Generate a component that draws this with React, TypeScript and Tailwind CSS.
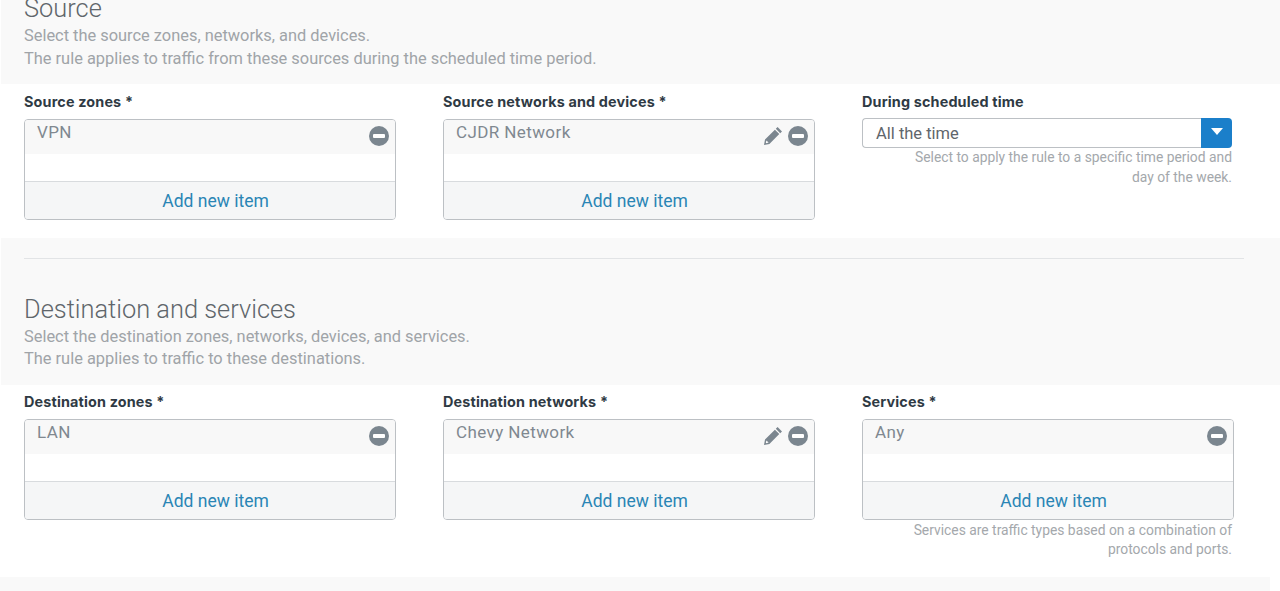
function MinusIcon() {
  return (
    <svg viewBox="0 0 20 20" className="w-5 h-5">
      <circle cx="10" cy="10" r="10" fill="#7b868f" />
      <rect x="4" y="8" width="12" height="4" rx="1" fill="#fff" />
    </svg>
  )
}

function PencilIcon() {
  return (
    <svg viewBox="0 0 20 20" className="w-5 h-5">
      <path d="M14.6 1 19 5.4 17.2 7.2 12.8 2.8Z M11.9 3.7 16.3 8.1 6.4 18 1 19 2 13.6Z" fill="#7b868f" />
      <path d="M3.4 14.4 5.6 16.6 3 17.2 2.8 17Z" fill="#fff" />
    </svg>
  )
}

function Label({ children }: { children: React.ReactNode }) {
  return <div className="text-[14.4px] tracking-[0.15px] leading-[18px] font-bold text-[#2f3a44] h-[18px] font-['Inter',sans-serif]">{children}</div>
}

function ItemBox({ label, item, edit, hint }: { label: string; item: string; edit?: boolean; hint?: string[] }) {
  return (
    <div className="w-[372px]">
      <Label>{label} <span>*</span></Label>
      <div className="mt-[8px] h-[101px] border border-[#bcc0c4] rounded-[4px] flex flex-col overflow-hidden bg-white">
        <div className="h-[34px] bg-[#f8f8f8] flex justify-between pl-3 pr-[6px] shrink-0">
          <span className="text-[17px] leading-[24px] tracking-[0.4px] text-[#808890]">{item}</span>
          <span className="flex items-center gap-[5px] pb-[2px]">
            {edit && <PencilIcon />}
            <MinusIcon />
          </span>
        </div>
        <div className="flex-1" />
        <div className="h-[38px] shrink-0 border-t border-[#d8dbde] bg-[#f5f6f7] pl-[11px] text-center text-[17.5px] leading-[38px] text-[#2a85b5]">
          Add new item
        </div>
      </div>
      {hint && (
        <div className="mt-[1px] w-[370px] text-right text-[13.85px] leading-[19px] text-[#a4a8ac]">
          {hint.map(h => <div key={h}>{h}</div>)}
        </div>
      )}
    </div>
  )
}

function TimeSelect() {
  return (
    <div className="w-[372px]">
      <Label>During scheduled time</Label>
      <div className="mt-[7px] w-[370px] h-[30px] flex">
        <div className="flex-1 border border-r-0 border-[#bcc0c4] rounded-l-[4px] pl-[13px] text-[16.5px] leading-[29px] text-[#5f666c]">All the time</div>
        <div className="w-[31px] bg-[#1b7fca] rounded-r-[4px] flex justify-center pt-[10px]">
          <div className="w-0 h-0 border-l-[6px] border-r-[6px] border-t-[7px] border-l-transparent border-r-transparent border-t-white" />
        </div>
      </div>
      <div className="w-[370px] text-right text-[13.85px] leading-[19.5px] text-[#a4a8ac]">
        <div>Select to apply the rule to a specific time period and</div>
        <div>day of the week.</div>
      </div>
    </div>
  )
}

export default function App() {
  return (
    <div className="h-[591px] overflow-hidden bg-white font-['Roboto',sans-serif]">
      <div className="h-[84px] ml-px bg-[#f9f9f9] pl-[23px] overflow-hidden">
        <h2 className="-mt-[8px] text-[25.4px] leading-[32px] text-[#60666b] font-light">Source</h2>
        <p className="text-[16.4px] leading-[23px] text-[#a0a4a8]">Select the source zones, networks, and devices.</p>
        <p className="text-[16.4px] leading-[23px] text-[#a0a4a8]">The rule applies to traffic from these sources during the scheduled time period.</p>
      </div>

      <div className="h-[154px] pt-[9px] pl-[24px] flex gap-[47px]">
        <ItemBox label="Source zones" item="VPN" />
        <ItemBox label="Source networks and devices" item="CJDR Network" edit />
        <TimeSelect />
      </div>

      <div className="h-[147px] ml-px bg-[#f9f9f9] pl-[23px] pt-[20px]">
        <div className="w-[1220px] border-t border-[#e2e4e6]" />
        <h2 className="mt-[34px] text-[25.4px] leading-[32px] text-[#60666b] font-light">Destination and services</h2>
        <p className="text-[16.4px] leading-[23px] text-[#a0a4a8]">Select the destination zones, networks, devices, and services.</p>
        <p className="-mt-px text-[16.4px] leading-[23px] text-[#a0a4a8]">The rule applies to traffic to these destinations.</p>
      </div>

      <div className="h-[192px] pt-[8px] pl-[24px] flex gap-[47px]">
        <ItemBox label="Destination zones" item="LAN" />
        <ItemBox label="Destination networks" item="Chevy Network" edit />
        <ItemBox label="Services" item="Any" hint={['Services are traffic types based on a combination of', 'protocols and ports.']} />
      </div>

      <div className="h-[14px] bg-[#f9f9f9] mr-[10px]" />
    </div>
  )
}
